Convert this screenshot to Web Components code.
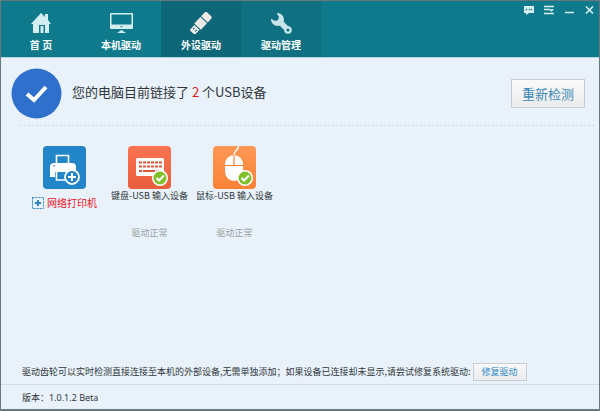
<!DOCTYPE html>
<html lang="zh-CN">
<head>
<meta charset="utf-8">
<title>外设驱动</title>
<style>
html, body { margin: 0; height: 100%; }
body { font: 9px/12px "Noto Sans CJK SC", sans-serif; color: #30363b; }
</style>
</head>
<body>
<driver-app></driver-app>

<template id="t-app">
  <style>
    :host { display: flex; flex-direction: column; box-sizing: border-box; min-height: 100vh; border: 1px solid #69777e; border-bottom-width: 2px; background: #e9f2fa; }
    header { display: flex; justify-content: space-between; align-items: flex-start; background: #107a8d; border-bottom: 1px solid #b5d3dc; }
    nav { display: flex; }
    main { flex: 1; display: flex; flex-direction: column; }
    .devices { display: grid; grid-template-columns: repeat(auto-fill, 85px); padding: 20px 21px 0; }
    .hint { display: flex; align-items: center; gap: 2px; margin-top: auto; padding: 0 21px 3px; }
    .hint p { margin: 0; white-space: nowrap; font-variant-east-asian: proportional-width; }
    footer { border-top: 1px solid #cbdde3; padding: 7px 21px 5px; font-family: "Noto Sans", "Noto Sans CJK SC", sans-serif; }
  </style>
  <header>
    <nav>
      <nav-tab label="首 页"><svg width="22" height="22" viewBox="0 0 22 22" fill="#d5eef1"><path fill-rule="evenodd" d="M11 1 15 5V2h3v6l3 4h-2v9h-4v-8H9v8H3v-9H1zM10.500 14h3v7h-3z"/></svg></nav-tab>
      <nav-tab label="本机驱动"><svg width="26" height="22" viewBox="0 0 26 22"><rect x="2" y="1" width="23" height="16" rx="1" fill="#d5eef1"/><path d="M3.500 2.500h20v10h-20z" fill="#107a8d"/><path d="M12.500 14h2v1h-2z" fill="#107a8d"/><path d="M13.500 18 18 21H9z" fill="#d5eef1"/></svg></nav-tab>
      <nav-tab label="外设驱动" current><svg width="22" height="22" viewBox="0 0 22 22"><g transform="translate(11 11) rotate(43)" fill="#eee9e5"><path d="M-4.500-10Q-4.500-12-2.500-12H2.500Q4.500-12 4.500-10V-5H-4.500z"/><path d="M-4.500-4H4.500V5H-4.500zM-3.500 6H3.500V12Q3.500 13 2.500 13H-2.500Q-3.500 13-3.500 12z"/><path d="M-2 8h1v2h-1zM1 8h1v2H1z" fill="#0e6778"/></g></svg></nav-tab>
      <nav-tab label="驱动管理" shaded><svg width="22" height="22" viewBox="0 0 22 22"><circle cx="7.500" cy="7.500" r="6.500" fill="#c9e5e9"/><path d="M0 0h6l3 5-1 3-3 1L0 6z" fill="#0f7082"/><path d="m10 10 8 8" stroke="#c9e5e9" stroke-width="5.500"/><circle cx="18" cy="18" r="3.800" fill="#c9e5e9"/><circle cx="18" cy="18" r="1.500" fill="#0f7082"/></svg></nav-tab>
    </nav>
    <window-controls></window-controls>
  </header>
  <main>
    <status-banner>您的电脑目前链接了 <b slot="count">2</b></status-banner>
    <section class="devices">
      <device-card kind="link" name="网络打印机">
        <svg width="43" height="43" viewBox="0 0 43 43"><rect width="43" height="43" rx="4" fill="#2185c8"/><path d="M7 21q0-4 4-4h18q4 0 4 4v10H7z" fill="#fff"/><path d="M13.500 18V9.500h12V18" fill="#2185c8" stroke="#fff" stroke-width="1.600"/><path d="M12 18h15" stroke="#fff" stroke-width="2"/><path d="M12 26h14v9H12z" fill="#2185c8"/><path d="M13.500 26v8H24" fill="none" stroke="#fff" stroke-width="1.600"/><path d="M10 20h2M16 31h5" stroke="#2185c8"/><circle cx="29" cy="31" r="7" fill="#2185c8" stroke="#fff" stroke-width="1.800"/><path d="M29 27v8m-4-4h8" stroke="#fff" stroke-width="2"/></svg>
      </device-card>
      <device-card name="键盘-USB 输入设备" state="驱动正常">
        <svg width="43" height="43" viewBox="0 0 43 43"><defs><linearGradient id="r" x2="0" y2="1"><stop stop-color="#fb7350"/><stop offset="1" stop-color="#e95f3d"/></linearGradient></defs><rect width="43" height="43" rx="4" fill="url(#r)"/><rect x="8" y="12" width="28" height="18" rx="1.500" fill="#fff"/><path d="M11 16.500h23M11 20.500h23" stroke="#d95a3b" stroke-width="2" stroke-dasharray="3 1"/><path d="M11 25h3m1 0h12m1 0h3" stroke="#d95a3b" stroke-width="2"/><circle cx="32" cy="32" r="8" fill="#fff"/><circle cx="32" cy="32" r="6.500" fill="#7fc02c"/><path d="m28.500 32 2.500 2.500 5-5" fill="none" stroke="#fff" stroke-width="2"/></svg>
      </device-card>
      <device-card name="鼠标-USB 输入设备" state="驱动正常">
        <svg width="43" height="43" viewBox="0 0 43 43"><defs><linearGradient id="o" x2="0" y2="1"><stop stop-color="#ff9856"/><stop offset="1" stop-color="#fa8236"/></linearGradient></defs><rect width="43" height="43" rx="4" fill="url(#o)"/><path d="M25.500 0c0 5-4.500 4-4.500 9" fill="none" stroke="#fff" stroke-width="1.500"/><rect x="12" y="9" width="18" height="26" rx="9" fill="#fff"/><path d="M12 19.500h18M21 9v10" stroke="#f58236" stroke-width="1.200"/><circle cx="32" cy="32" r="8" fill="#fff"/><circle cx="32" cy="32" r="6.500" fill="#7fc02c"/><path d="m28.500 32 2.500 2.500 5-5" fill="none" stroke="#fff" stroke-width="2"/></svg>
      </device-card>
    </section>
    <div class="hint"><p>驱动齿轮可以实时检测直接连接至本机的外部设备，无需单独添加；如果设备已连接却未显示，请尝试修复系统驱动:</p><flat-button size="small">修复驱动</flat-button></div>
  </main>
  <footer>版本：1.0.1.2 Beta</footer>
</template>

<template id="t-tab">
  <style>
    :host { display: block; width: 80px; }
    :host([current]) { background: #0e6778; }
    :host([shaded]) { background: #0f7082; }
    button { all: unset; box-sizing: border-box; width: 100%; display: flex; flex-direction: column; align-items: center; gap: 4px; padding: 11px 0 5px; color: #fff; font: bold 10px/14px "Noto Sans CJK SC", sans-serif; white-space: nowrap; cursor: pointer; }
  </style>
  <button type="button"><slot></slot><span></span></button>
</template>

<template id="t-controls">
  <style>
    :host { display: flex; gap: 4px; padding: 1px 2px 0 0; }
    button { all: unset; display: flex; width: 16px; height: 16px; cursor: pointer; }
  </style>
  <button type="button" aria-label="反馈"><svg width="16" height="16" viewBox="0 0 16 16"><path d="M3 4h10v7H8l-3 2v-2H3z" fill="#d9f0f3"/><path d="M5 7h1v1H5zM8 7h1v1H8zM10 7h1v1h-1z" fill="#107a8d" stroke="#107a8d" stroke-width=".4"/></svg></button>
  <button type="button" aria-label="菜单"><svg width="16" height="16" viewBox="0 0 16 16" stroke="#d9f0f3" fill="#d9f0f3"><path d="M3 4.500h10M3 7.500h6M3 11.500h10" stroke-width="1.300"/><path d="M8.500 7.500h4l-2 2z" stroke-width=".6"/></svg></button>
  <button type="button" aria-label="最小化"><svg width="16" height="16" viewBox="0 0 16 16"><path d="M4 10.500h9" stroke="#d9f0f3" stroke-width="1.500"/></svg></button>
  <button type="button" aria-label="关闭"><svg width="16" height="16" viewBox="0 0 16 16"><path d="m5 4.500 7 7m0-7-7 7" stroke="#d9f0f3" stroke-width="1.600"/></svg></button>
</template>

<template id="t-banner">
  <style>
    :host { display: flex; align-items: center; gap: 10px; margin: 0 5px 0 10px; padding: 10px 9px 7px 0; position: relative; }
    .rule { position: absolute; left: 9px; right: 0; bottom: 0; height: 1px; background: repeating-linear-gradient(90deg, #cfdbe4 0 2px, transparent 2px 4px); }
    svg { flex: none; }
    h1 { margin: 0; flex: 1; font: 13px/18px "Noto Sans CJK SC", sans-serif; padding-bottom: 4px; }
    ::slotted(b) { font-weight: 400; color: #dd1a1a; }
  </style>
  <svg width="51" height="51" viewBox="0 0 51 51"><circle cx="25.500" cy="25.500" r="25" fill="#2f70cc"/><path d="m16 26 7 6 12-13" fill="none" stroke="#fff" stroke-width="4"/></svg>
  <h1><slot></slot><slot name="count"></slot> 个USB设备</h1>
  <flat-button>重新检测</flat-button>
  <span class="rule"></span>
</template>

<template id="t-button">
  <style>
    :host { display: block; flex: none; }
    button { display: block; margin: 0; border: 1px solid #c8cdd1; border-radius: 0; background: linear-gradient(#fafafa, #eaebec); color: #3a87b5; font: 13px/19px "Noto Sans CJK SC", sans-serif; padding: 4px 10px; cursor: pointer; }
    :host([size=small]) button { font-size: 9px; line-height: 12px; padding: 2px 8px; color: #2f8cc9; }
  </style>
  <button type="button"><slot></slot></button>
</template>

<template id="t-card">
  <style>
    :host { display: flex; flex-direction: column; align-items: center; text-align: center; white-space: nowrap; }
    ::slotted(svg) { display: block; }
    .name { margin-top: 1px; }
    .state { margin-top: 25px; color: #9ba1a5; }
    a { display: flex; align-items: center; gap: 3px; margin-top: 7px; color: #e8121d; font: 10px/14px "Noto Sans CJK SC", sans-serif; text-decoration: none; }
  </style>
  <slot></slot>
</template>

<script>
class Base extends HTMLElement {
  constructor() {
    super();
    this.attachShadow({ mode: 'open' }).append(document.getElementById(this.constructor.tpl).content.cloneNode(true));
  }
}
customElements.define('flat-button', class extends Base { static tpl = 't-button'; });
customElements.define('window-controls', class extends Base { static tpl = 't-controls'; });
customElements.define('status-banner', class extends Base { static tpl = 't-banner'; });
customElements.define('nav-tab', class extends Base {
  static tpl = 't-tab';
  connectedCallback() { this.shadowRoot.querySelector('span').textContent = this.getAttribute('label'); }
});
customElements.define('device-card', class extends Base {
  static tpl = 't-card';
  connectedCallback() {
    const name = this.getAttribute('name');
    if (this.getAttribute('kind') === 'link') {
      const a = document.createElement('a');
      a.href = '#printer';
      a.innerHTML = '<svg width="12" height="12" viewBox="0 0 12 12" fill="none" stroke="#2d86bd"><path d="M.5.5h11v11H.5z" stroke-dasharray="2 1"/><path d="M6 3v6M3 6h6" stroke-width="2"/></svg><span></span>';
      a.lastChild.textContent = name;
      this.shadowRoot.append(a);
      return;
    }
    for (const [cls, text] of [['name', name], ['state', this.getAttribute('state')]]) {
      const el = document.createElement('div');
      el.className = cls;
      el.textContent = text;
      this.shadowRoot.append(el);
    }
  }
});
customElements.define('driver-app', class extends Base { static tpl = 't-app'; });
</script>
</body>
</html>
